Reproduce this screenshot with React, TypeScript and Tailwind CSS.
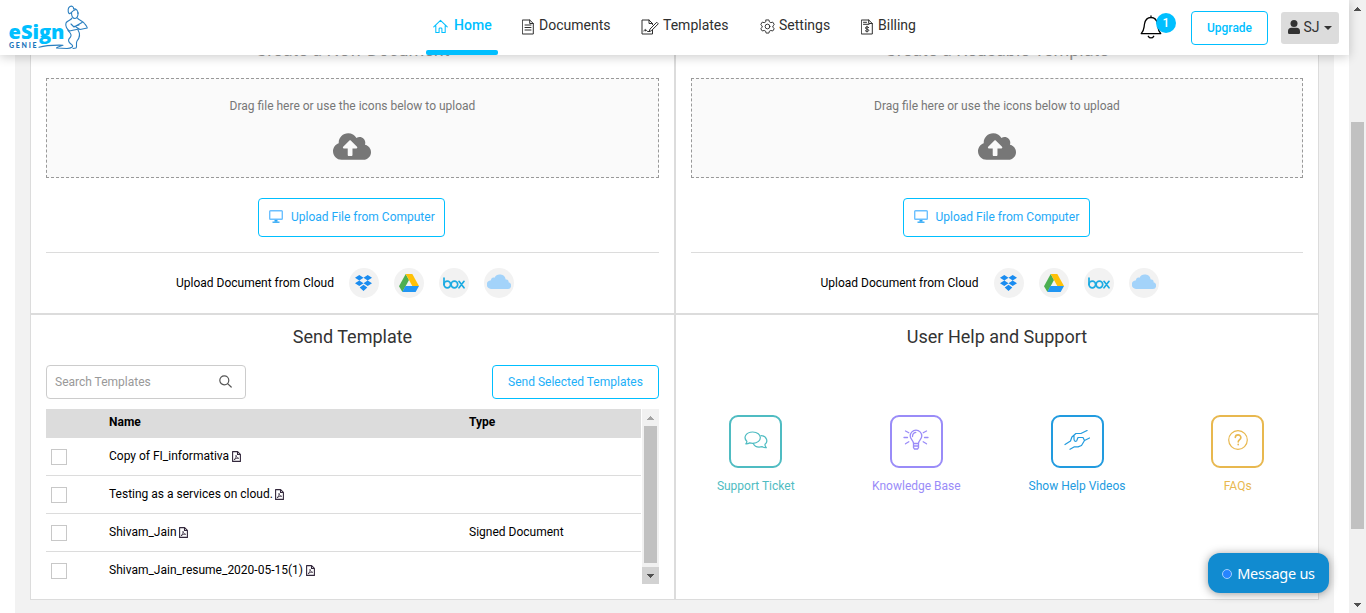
import React from "react";

type IconProps = { className?: string };

const line = {
  fill: "none",
  stroke: "currentColor",
  strokeLinecap: "round" as const,
  strokeLinejoin: "round" as const,
};

function Logo() {
  return (
    <svg className="block h-[48px] w-[84px]" viewBox="6 4 84 48">
      <text x="8.5" y="39" fontFamily="Open Sans, sans-serif" fontWeight="800" fontSize="19.500" fill="#00bfff" textLength="56" lengthAdjust="spacingAndGlyphs">eSign</text>
      <text x="9" y="48" fontFamily="Lato, sans-serif" fontWeight="900" fontSize="7" fill="#1b75bb" textLength="27.5">GENIE</text>
      <g {...line} stroke="#2a7fc0" strokeWidth="1.100">
        <path d="M69 13.500C67.500 11 68 7.500 70 6.500C72 5.500 74 7 73.500 9C76 8.500 78 10.500 78 13.500M69 13.500C71 14.500 72 10.500 75 10" />
        <path d="M71.500 12.500C71.500 16 73 18.500 75 18.500C77 18.500 78.300 16 78 12.500" />
        <path d="M72 18C71 20.500 67 20.500 66 23C65 26 67 29.500 69.500 31C72 30.500 76 29.500 79 29M77.500 18C78 20 83 21 84.500 23.500C86 25.500 87.300 27 87.300 28L80 29.500L76 27M71 24L74 27L82 22.500M74 26.500L79 25" />
        <path d="M68 30.500C70 33 72.500 34.500 70.500 37C67.500 40 68 42 71.500 44.500C74.500 46.500 71 48.500 67 48.500M78 30C80.500 34 79.500 38 77 41C75.500 43.500 77.500 46 76 48L73 48.500" />
        <path d="M39 47.300C45 45.500 54 45 63 45.200C60 46.300 57 47 56.500 48L67 48.500" />
      </g>
    </svg>
  );
}

function HomeIcon({ className }: IconProps) {
  return (
    <svg className={className} viewBox="0 0 16 16" {...line} strokeWidth="1.100">
      <path d="M.8 8.500L8 1.500l7.200 7M3 6.800v7.700h3.500v-4q0-1 1-1h1q1 0 1 1v4H13V6.800" />
    </svg>
  );
}

function DocumentIcon({ className }: IconProps) {
  return (
    <svg className={className} viewBox="0 0 12 16" {...line} strokeWidth="1">
      <path d="M.7 1h7L11.300 4.500V15H.7zM7.700 1v3.500h3.600M3 6h6M3 8.500h6M3 11h6" />
    </svg>
  );
}

function TemplateIcon({ className }: IconProps) {
  return (
    <svg className={className} viewBox="0 0 18 16" {...line} strokeWidth="1">
      <path d="M11.500 4.500L8 1H1v14h10.500v-4M8 1v3.500h3.500v1M16 3.500l1.300 1.300-7 7-2.300.9.900-2.300zM3 12c1-2.500 2-2 1.500 0 1-1 1.500-.5 2 .5h1.500" />
    </svg>
  );
}

function GearIcon({ className }: IconProps) {
  return (
    <svg className={className} viewBox="0 0 16 16" {...line} strokeWidth="1">
      <path d="M6.500 1h3l.5 2 1.600.9 2-.6 1.600 2.700-1.500 1.400v1.500l1.500 1.300-1.600 2.600-2-.6L10 13l-.5 2h-3L6 13l-1.600-.8-2 .6-1.600-2.600 1.500-1.300V7.400L.8 6l1.600-2.700 2 .6L6 3z" />
      <circle cx="8" cy="8" r="2.500" />
    </svg>
  );
}

function BillingIcon({ className }: IconProps) {
  return (
    <svg className={className} viewBox="0 0 12 16" {...line} strokeWidth="1">
      <path d="M.7 1h7L11.300 4.500V15H.7zM7.700 1v3.500h3.600M2.500 3.300h3M2.500 5.300h5.500" />
      <path d="M7.700 8.500c-1-1-3.300-.8-3.300.5 0 1.500 3.400.8 3.400 2.300 0 1.400-2.500 1.500-3.500.5M6 7.200V13" />
    </svg>
  );
}

function BellIcon({ className }: IconProps) {
  return (
    <svg className={className} viewBox="0 0 22 24" {...line} strokeWidth="1.300">
      <path d="M1.200 18.600h19.600c-3.100-3-2.500-5-3.300-9.600C16.800 5 14.500 2.500 11 2.500S5.200 5 4.500 9c-.8 4.600-.2 6.600-3.300 9.600zM11 1v1.500M8.300 21.300c1.300 2.200 4.100 2.200 5.400 0" />
    </svg>
  );
}

function PersonIcon({ className }: IconProps) {
  return (
    <svg className={className} viewBox="0 0 12 14" fill="currentColor">
      <circle cx="6" cy="3.500" r="3.500" />
      <path d="M3.400 7.700h5.200Q12 7.800 12 11.200V12.700Q12 14 10.800 14H1.200Q0 14 0 12.700V11.200Q0 7.800 3.400 7.700z" />
    </svg>
  );
}

function CloudUploadIcon({ className }: IconProps) {
  return (
    <svg className={className} viewBox="0 0 640 448" fill="currentColor">
      <path d="M537.600 194.600c4.100-10.700 6.400-22.400 6.400-34.600 0-53-43-96-96-96-19.700 0-38.100 6-53.300 16.200C367 32.200 315.300 0 256 0 167.600 0 96 71.600 96 160c0 2.700.1 5.400.2 8.100C40.200 187.800 0 241.200 0 304c0 79.500 64.500 144 144 144h368c70.700 0 128-57.300 128-128 0-61.900-44-113.600-102.400-125.400zM393.400 256H328v112c0 8.800-7.200 16-16 16h-48c-8.800 0-16-7.200-16-16V256h-65.400c-14.300 0-21.400-17.200-11.300-27.300l105.400-105.400c6.200-6.200 16.400-6.200 22.600 0l105.400 105.400c10.100 10.100 2.900 27.300-11.300 27.300z" />
    </svg>
  );
}

function MonitorIcon({ className }: IconProps) {
  return (
    <svg className={className} viewBox="0 0 14 13" fill="none">
      <rect x=".7" y=".7" width="12.600" height="8.600" rx=".8" stroke="#6cc0ff" strokeWidth="1.400" />
      <path d="M3.500 12.200h7" stroke="#2aa6f5" strokeWidth="1.300" />
      <path d="M5.500 10.800h3" stroke="#2aa6f5" strokeWidth="1.800" />
    </svg>
  );
}

function DropboxIcon() {
  return (
    <svg className="mr-px h-4 w-[17px]" viewBox="0 0 17 16" fill="#1a8cf0">
      <path d="M4.300 0l4.200 2.800-4.200 2.700L0 2.800zM12.700 0L17 2.800l-4.300 2.700-4.200-2.700zM4.300 5.500l4.200 2.700-4.200 2.800L0 8.200zM12.700 5.500L17 8.200 12.700 11 8.500 8.200zM8.500 9.800l3.800 2.800L8.500 16l-3.800-3.400z" />
    </svg>
  );
}

function DriveIcon() {
  return (
    <svg className="h-[18px] w-5" viewBox="0 0 20 18">
      <path d="M6.700 0L0 12.200 3.400 18 10 6z" fill="#4caf50" />
      <path d="M6.700 0h6.600L20 12h-6.700z" fill="#ffc107" />
      <path d="M6.400 12H20l-3.400 6H3.300z" fill="#2196f3" />
    </svg>
  );
}

function BoxIcon() {
  return (
    <svg className="h-3 w-[22px]" viewBox="0 0 22 12" {...line} stroke="#1cabe2" strokeWidth="1.700">
      <path d="M1 1v6.500" />
      <circle cx="4.300" cy="7.500" r="3.300" />
      <circle cx="11.400" cy="7.500" r="3.300" />
      <path d="M16 4.300l5 6.500M21 4.300l-5 6.500" />
    </svg>
  );
}

function SkyCloudIcon() {
  return (
    <svg className="-mt-1 h-4 w-6 shrink-0" viewBox="0 0 24 16" fill="#a3d3fa">
      <path d="M4.300 16A4.400 4.400 0 0 1 4 7.200C4 4.800 6 4 7.500 4.700A6 6 0 0 1 18.700 6.500C21 6 22 8 21.500 9.300A3.400 3.400 0 0 1 21 16z" />
    </svg>
  );
}

function PdfIcon() {
  return (
    <svg className="mt-px h-[11px] w-[9px] text-[#33283c]" viewBox="0 0 9 11" {...line} strokeWidth="1.100">
      <path d="M.6.600h5L8.400 3.300v7.100H.6zM5.500.600v2.900h2.900" />
      <path strokeWidth=".8" d="M2.300 8.600c1.200-.7 2-2.500 1.700-4.300.3 1.800 1.200 2.800 2.700 3C5 7 3.500 7.500 2.300 8.600z" />
    </svg>
  );
}

function SearchIcon({ className }: IconProps) {
  return (
    <svg className={className} viewBox="0 0 13 13" {...line} strokeWidth="1.200">
      <circle cx="5.300" cy="5.300" r="4.500" />
      <path d="M8.600 8.600l3.600 3.400" />
    </svg>
  );
}

function ChatIcon() {
  return (
    <svg className="h-[18px] w-6" viewBox="0 0 24 18" {...line} strokeWidth="1.200">
      <path d="M1.800 12.800C3 11.500 3 11 2.800 10.200-1 6.500 1.800 1 8.700 1c9.800 0 10.500 11 0 11.300-1.300 0-2-.1-3-.4-1.300.7-2.400 1-3.900.9z" />
      <path d="M17 4.600c6 .5 7.300 6.500 4 8.700-.2 1.500.2 2.200 1.300 3.400-2 .1-3-.3-4-1-4 1-7.700-.2-9-3.200" />
    </svg>
  );
}

function BulbIcon() {
  return (
    <svg className="h-[21px] w-[26px]" viewBox="0 0 26 21" {...line} strokeWidth="1.300">
      <path d="M10.500 14.500c0-3-3.300-4.300-3.300-7.500a5.800 5.800 0 0 1 11.600 0c0 3.200-3.300 4.500-3.300 7.500zM10.500 14.500v4.200l1 1.300h3l1-1.300v-4.200M10.500 17h5M9.500 7.500Q9.500 4 12.800 3.400M1 8.500h3.500M21.500 8.500H25M2.500 2l3.300 1.800M23.500 2l-3.300 1.800M2.500 14.800l3.300-2M23.500 14.800l-3.300-2" />
    </svg>
  );
}

function HandsIcon() {
  return (
    <svg className="h-5 w-[26px]" viewBox="0 0 26 20" {...line} strokeWidth="1.200">
      <path d="M1 14.500l5.500-3.500 1.400-4 4-3.500h5l6.200-3M25.500 8l-5 2.500-3 5-3.500 1.400H10L6 19.300M10 5.200v4c.2 2.800 3 2.800 3.200.3l.8-2h5l1.500 3" />
    </svg>
  );
}

function QuestionIcon() {
  return (
    <svg className="h-5 w-5" viewBox="0 0 20 20" {...line} strokeWidth="1.200">
      <circle cx="10" cy="10" r="9.300" />
      <path strokeWidth="1.600" d="M7.300 7.500c0-3.500 5.600-3.500 5.600 0 0 2.200-2.700 2-2.700 4.500M10.200 14.300v.500" />
    </svg>
  );
}

function Caret({ up = false }: { up?: boolean }) {
  return (
    <svg className="h-1 w-[7px]" viewBox="0 0 7 4" fill="currentColor" shapeRendering="crispEdges">
      <path d={up ? "M0 4L3.500 0L7 4z" : "M0 0h7L3.500 4z"} />
    </svg>
  );
}

function Header() {
  return (
    <header className="relative z-10 flex h-[55px] w-[1349px] shrink-0 bg-white shadow-[0_2px_10px_rgba(0,0,0,0.2)]">
      <div className="w-[426px] pt-1 pl-1.5">
        <Logo />
      </div>
      <nav className="flex w-[714px] text-[14px] leading-[50px] text-[#2f2f2f]">
        <a className="flex h-[55px] w-[72px] flex-col justify-between text-[#00bfff]">
          <span className="flex h-[50px] items-center gap-[6px] pl-[7px] font-medium tracking-[0.1px]">
            <HomeIcon className="mt-[3px] h-[15px] w-[15px]" />
            Home
          </span>
          <span className="h-[5px] rounded-[2px] bg-[#00bfff]" />
        </a>
        <a className="ml-6 flex h-[50px] w-[119px] items-center gap-[5px]">
          <DocumentIcon className="mt-[3px] h-4 w-3" />
          Documents
        </a>
        <a className="flex h-[50px] w-[119px] items-center gap-1">
          <TemplateIcon className="mt-[3px] h-4 w-[18px]" />
          Templates
        </a>
        <a className="flex h-[50px] w-[101px] items-center gap-1">
          <GearIcon className="mt-[3px] h-[15px] w-[15px]" />
          Settings
        </a>
        <a className="flex h-[50px] items-center gap-[5px]">
          <BillingIcon className="mt-[3px] h-4 w-3" />
          Billing
        </a>
      </nav>
      <div className="relative w-[51px] pt-[15px]">
        <BellIcon className="h-6 w-[22px] text-black" />
        <span className="absolute top-[13px] left-4 flex h-5 w-5 items-center justify-center rounded-full bg-[#00bfff] text-[12px] font-medium text-white">1</span>
      </div>
      <button className="mt-[11px] h-[34px] w-[77px] rounded-[4px] border border-[#00bfff] text-[12px] font-medium text-[#00bfff]">Upgrade</button>
      <button className="mt-3 ml-[13px] flex h-8 w-[58px] items-center justify-center rounded-[3px] bg-[#dcdcdc] text-[14px] text-[#333]">
        <PersonIcon className="mr-[3px] -mt-0.5 h-[14px] w-3" />
        <span className="-mt-0.5">SJ</span>
        <svg className="ml-1 h-1 w-2" viewBox="0 0 8 4" fill="currentColor"><path d="M0 0h8L4 4z" /></svg>
      </button>
    </header>
  );
}

function UploadPanel({ title, className }: { title: string; className: string }) {
  return (
    <section className={`flex h-[274px] flex-col items-center border-b border-[#dcdcdc] px-[15px] ${className}`}>
      <h2 className="-mt-px h-[39px] text-[18px] leading-[21px] text-[#999]">{title}</h2>
      <div className="flex h-[100px] w-full flex-col items-center border border-dashed border-[#999] bg-[#fafafa]">
        <p className="mt-[18px] h-[18px] leading-[18px] text-[#777]">Drag file here or use the icons below to upload</p>
        <CloudUploadIcon className="mt-[18px] mr-px h-[27px] w-[38px] text-[#777]" />
      </div>
      <button className="mt-5 mr-0.5 flex h-[39px] w-[187px] shrink-0 items-center rounded-[4px] border border-[#00bfff] pl-[10px] text-[#1eaaf8]">
        <MonitorIcon className="mr-2 -mt-0.5 h-[13px] w-[14px]" />
        <span className="-mt-0.5">Upload File from Computer</span>
      </button>
      <div className="mt-[15px] flex w-full items-center justify-center border-t border-[#dcdcdc] pt-[15px] text-black">
        <span className="mr-[15px]">Upload Document from Cloud</span>
        <div className="flex gap-[15px] pr-[15px] [&>span]:flex [&>span]:size-[30px] [&>span]:items-center [&>span]:justify-center [&>span]:rounded-full [&>span]:bg-[#f2f2f2]">
          <span><DropboxIcon /></span>
          <span><DriveIcon /></span>
          <span><BoxIcon /></span>
          <span><SkyCloudIcon /></span>
        </div>
      </div>
    </section>
  );
}

const rows = [
  { name: "Copy of FI_informativa", type: "" },
  { name: "Testing as a services on cloud.", type: "" },
  { name: "Shivam_Jain", type: "Signed Document" },
  { name: "Shivam_Jain_resume_2020-05-15(1)", type: "" },
];

function SendTemplate() {
  return (
    <section className="h-[286px] border-t border-r border-[#dcdcdc] px-[15px]">
      <h2 className="pt-[11px] text-center text-[18px] leading-[21px] text-[#333]">Send Template</h2>
      <div className="mt-[18px] flex justify-between">
        <div className="flex h-[34px] w-[200px] items-center justify-between rounded-[4px] border border-[#ccc] pr-[13px] pl-2 text-[#999]">
          <span>Search Templates</span>
          <SearchIcon className="-mt-0.5 h-[13px] w-[13px] text-[#555]" />
        </div>
        <button className="h-[34px] w-[167px] rounded-[4px] border border-[#00bfff] text-[#1eb0f8]">Send Selected Templates</button>
      </div>
      <div className="mt-[10px] flex h-[175px] justify-between overflow-hidden text-black">
        <div className="w-[595px]">
          <div className="flex h-[29px] bg-[#dcdcdc] pl-[63px] leading-[26px] font-bold">
            <span className="w-[360px]">Name</span>
            <span>Type</span>
          </div>
          {rows.map((r) => (
            <div key={r.name} className="flex h-[38px] items-center border-b border-[#dcdcdc] pl-[5px]">
              <span className="mt-px mr-[42px] h-4 w-4 border border-[#c8c8c8] bg-white" />
              <span className="flex w-[360px] items-center gap-[2.5px] pb-0.5">{r.name}<PdfIcon /></span>
              <span className="pb-0.5">{r.type}</span>
            </div>
          ))}
        </div>
        <div className="flex w-[17px] flex-col bg-[#f1f1f1]">
          <span className="flex h-[17px] items-center justify-center text-[#a3a3a3]"><Caret up /></span>
          <span className="mx-[2px] h-[137px] bg-[#c1c1c1]" />
          <span className="mt-1 flex h-[17px] items-center justify-center bg-[#d2d2d2] text-[#505050]"><Caret /></span>
        </div>
      </div>
    </section>
  );
}

function HelpTile({ label, className, children }: { label: string; className: string; children: React.ReactNode }) {
  return (
    <a className={`flex flex-col items-center ${className}`}>
      <span className="flex h-[53px] w-[53px] items-center justify-center rounded-[9px] border-2 border-current pb-1">{children}</span>
      <span className="mt-[9px] leading-[18px]">{label}</span>
    </a>
  );
}

function HelpPanel() {
  return (
    <section className="h-[286px] border-t border-l border-[#dcdcdc]">
      <h2 className="pt-[11px] text-center text-[18px] leading-[21px] text-[#333]">User Help and Support</h2>
      <div className="mt-[68px] -ml-[0.6px] grid grid-cols-4">
        <HelpTile label="Support Ticket" className="text-[#4fbcc2]"><ChatIcon /></HelpTile>
        <HelpTile label="Knowledge Base" className="text-[#9a8cf8]"><BulbIcon /></HelpTile>
        <HelpTile label="Show Help Videos" className="text-[#229bdf]"><HandsIcon /></HelpTile>
        <HelpTile label="FAQs" className="text-[#e8b84f]"><QuestionIcon /></HelpTile>
      </div>
    </section>
  );
}

export default function App() {
  return (
    <div className="relative flex h-[613px] w-[1366px] overflow-hidden bg-white font-['Roboto',sans-serif] text-[12px]">
      <div className="w-[1349px]">
        <Header />
        <main className="mx-[15px] h-[558px] bg-[#f2f2f2] px-[15px]">
          <div className="relative -top-[15px] grid h-[560px] grid-cols-[644px_643px] border-x border-b border-[#dcdcdc] bg-white">
            <UploadPanel title="Create a New Document" className="border-r" />
            <UploadPanel title="Create a Reusable Template" className="border-l" />
            <SendTemplate />
            <HelpPanel />
          </div>
        </main>
      </div>
      <div className="flex w-[17px] flex-col bg-[#f1f1f1]">
        <span className="flex h-[17px] items-center justify-center text-[#505050]"><Caret up /></span>
        <span className="mx-[2px] mt-[105px] h-[407px] bg-[#c1c1c1]" />
        <span className="mt-[67px] flex h-[17px] items-center justify-center text-[#505050]"><Caret /></span>
      </div>
      <button className="absolute top-[553px] left-[1208px] z-20 flex h-10 w-[121px] items-center justify-center gap-[5px] rounded-[12px] bg-[#118bd0] font-['Noto_Sans',sans-serif] text-[14.500px] tracking-[-0.25px] text-white shadow-[0_1px_10px_rgba(0,0,0,0.4)]">
        <span className="mt-0.5 h-[10px] w-[10px] rounded-full border border-[#9fd0ff] bg-[#2684ff]" />
        <span className="mt-px">Message us</span>
      </button>
    </div>
  );
}
